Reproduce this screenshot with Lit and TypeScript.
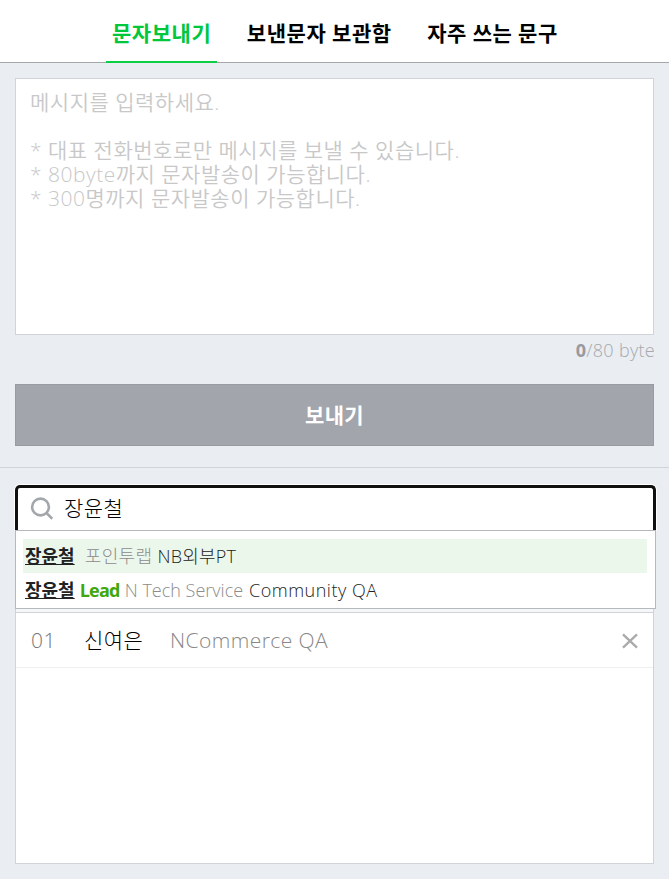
import { LitElement, html, css } from "lit";
import { customElement, property, state } from "lit/decorators.js";
import { classMap } from "lit/directives/class-map.js";

interface Suggestion {
  name: string;
  role?: string;
  company: string;
  team: string;
}

const fontStack = css`"Open Sans", "Noto Sans CJK KR", sans-serif`;

@customElement("sms-tabs")
class SmsTabs extends LitElement {
  @state() private active = 0;
  private tabs = ["문자보내기", "보낸문자 보관함", "자주 쓰는 문구"];

  static styles = css`
    :host { display: block; }
    nav {
      display: flex;
      box-sizing: border-box;
      height: 63px;
      padding-left: 106px;
      gap: 23.5px;
      background: #fff;
      border-bottom: 1px solid #a5a7a8;
    }
    .tab {
      box-sizing: border-box;
      height: 63px;
      padding: 0 6px;
      font: 700 21px/65px "Noto Sans CJK KR", sans-serif;
      letter-spacing: 0.55px;
      word-spacing: 0.4px;
      white-space: nowrap;
      color: #000;
      border-bottom: 2px solid transparent;
    }
    .active { color: #00c73c; border-color: #0dcf43; }
  `;

  render() {
    return html`<nav>
      ${this.tabs.map(
        (t, i) => html`<div
          class=${classMap({ tab: true, active: i === this.active })}
          @click=${() => (this.active = i)}
        >${t}</div>`
      )}
    </nav>`;
  }
}

@customElement("message-composer")
class MessageComposer extends LitElement {
  private hint = [
    "메시지를 입력하세요.",
    "",
    "* 대표 전화번호로만 메시지를 보낼 수 있습니다.",
    "* 80byte까지 문자발송이 가능합니다.",
    "* 300명까지 문자발송이 가능합니다.",
  ];

  static styles = css`
    :host { display: block; padding: 15px 15px 21px; border-bottom: 1px solid #d0d4d9; }
    .box {
      box-sizing: border-box;
      height: 257px;
      padding: 11px 14px;
      background: #fff;
      border: 1px solid #d0d4d9;
      color: #c8c8c8;
      font: 350 21px/24px ${fontStack};
      letter-spacing: 0.5px;
    }
    .line { height: 24px; white-space: pre; }
    .count {
      height: 49px;
      text-align: right;
      font: 350 18px/30px ${fontStack};
      letter-spacing: 0.3px;
      margin-right: -1px;
      color: #a6a9ae;
    }
    .count b { font-weight: 700; color: #979a9f; }
    .send {
      display: block;
      box-sizing: border-box;
      width: 100%;
      height: 62px;
      border: 1px solid #989ca0;
      background: #a2a5ac;
      color: #fff;
      font: 700 21px/58px "Noto Sans CJK KR", sans-serif;
      letter-spacing: 0.4px;
      text-align: center;
    }
  `;

  render() {
    return html`
      <div class="box">${this.hint.map((l) => html`<div class="line">${l}</div>`)}</div>
      <div class="count"><b>0</b>/80 byte</div>
      <div class="send">보내기</div>
    `;
  }
}

@customElement("recipient-search")
class RecipientSearch extends LitElement {
  @property() query = "장윤철";
  private suggestions: Suggestion[] = [
    { name: "장윤철", company: "포인투랩", team: "NB외부PT" },
    { name: "장윤철", role: "Lead", company: "N Tech Service", team: "Community QA" },
  ];

  static styles = css`
    :host { display: block; position: relative; height: 127px; }
    .field {
      box-sizing: border-box;
      height: 45px;
      display: flex;
      align-items: center;
      padding: 0 12px;
      gap: 11px;
      background: #fff;
      border: 3px solid #101010;
      border-bottom: 0;
      border-radius: 5px 5px 0 0;
      box-shadow: 0 0 0 1px #fff;
    }
    .field svg { display: block; flex: none; }
    .query { font: 300 21px/40px ${fontStack}; color: #000; letter-spacing: 0.4px; margin-top: -3px; }
    .menu {
      position: absolute;
      box-sizing: border-box;
      left: 0;
      right: 0;
      top: 45px;
      height: 79px;
      padding: 8px 8px 8px 7px;
      background: #fff;
      border: 1px solid #b5b8bd;
    }
    .row {
      display: flex;
      height: 34px;
      padding-left: 2px;
      font: 300 18px/34px ${fontStack};
      white-space: pre;
      color: #8c8c8c;
    }
    .current { background: #ecf7ec; }
    .name { font-weight: 700; color: #222; text-decoration: underline; text-decoration-thickness: 1px; text-underline-offset: 1px; margin-right: 5px; }
    .role { font-weight: 700; color: #40a70c; letter-spacing: -0.75px; margin-right: 5px; }
    .company { margin-right: 6px; }
    .wide { margin-left: 5px; letter-spacing: 0.4px; margin-right: 5px; }
    .team { color: #222; letter-spacing: 0.5px; }
    .wide + .team { letter-spacing: 0.2px; }
  `;

  render() {
    return html`
      <div class="field">
        <svg width="23" height="24" viewBox="0 0 23 24" fill="none" stroke="#a3a6aa" stroke-width="2.6">
          <circle cx="10.5" cy="10" r="8.4" /><path d="M16.5 16l5.8 5.8" />
        </svg>
        <span class="query">${this.query}</span>
      </div>
      <div class="menu">
        ${this.suggestions.map(
          (s, i) => html`<div class=${classMap({ row: true, current: i === 0 })}><span class="name">${s.name}</span>${s.role ? html`<span class="role">${s.role}</span>` : ""}<span class=${classMap({ company: true, wide: !s.role })}>${s.company}</span><span class="team">${s.team}</span></div>`
        )}
      </div>
    `;
  }
}

@customElement("recipient-list")
class RecipientList extends LitElement {
  static styles = css`
    :host {
      display: block;
      box-sizing: border-box;
      height: 255px;
      background: #fff;
      border: 1px solid #d0d4d9;
      border-top: 0;
    }
    .strip { box-sizing: border-box; height: 4px; background: #f5f7f9; border-bottom: 1px solid #d0d4d9; }
    .row {
      box-sizing: border-box;
      display: flex;
      align-items: center;
      height: 55px;
      padding: 0 15px;
      border-bottom: 1px solid #eee;
      font: 300 21px/54px ${fontStack};
      white-space: nowrap;
    }
    .num { width: 53px; color: #777; letter-spacing: 0.6px; }
    .name { width: 86px; color: #000; letter-spacing: 0.4px; }
    .org { flex: 1; color: #888; letter-spacing: 0.43px; }
    svg { display: block; margin-top: 2px; }
  `;

  render() {
    return html`<div class="strip"></div><div class="row">
      <span class="num">01</span><span class="name">신여은</span><span class="org">NCommerce QA</span>
      <svg width="16" height="16" viewBox="0 0 16 16" stroke="#aaa" stroke-width="2.3"><path d="M1 1.3l14 13.4M15 1.3L1 14.7" /></svg>
    </div>`;
  }
}

@customElement("app-root")
class AppRoot extends LitElement {
  static styles = css`
    :host { display: block; box-sizing: border-box; height: 879px; background: #eaedf2; overflow: hidden; }
    .recipients { padding: 17px 15px 0; }
    recipient-search { margin-right: -2px; height: 124px; }
  `;

  render() {
    return html`
      <sms-tabs></sms-tabs>
      <message-composer></message-composer>
      <div class="recipients">
        <recipient-search></recipient-search>
        <recipient-list></recipient-list>
      </div>
    `;
  }
}
